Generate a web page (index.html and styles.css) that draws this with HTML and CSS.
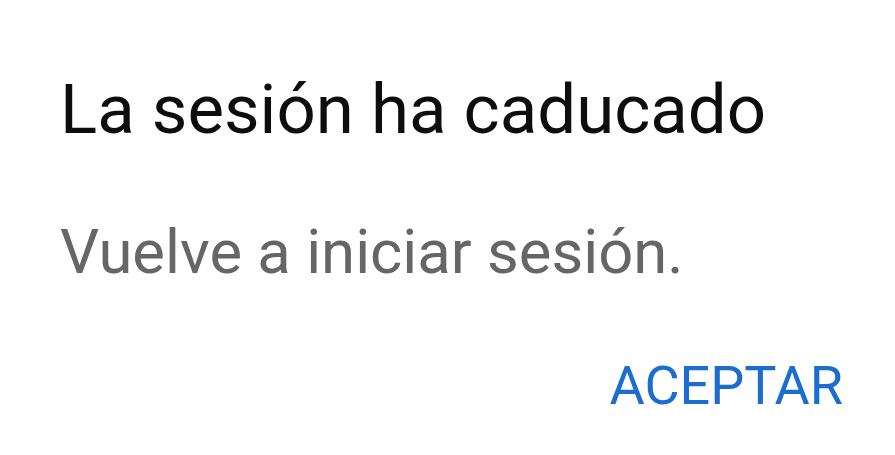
FILE: index.html
```html
<!DOCTYPE html>
<html lang="es">
<head>
<meta charset="utf-8">
<link rel="stylesheet" href="styles.css">
</head>
<body>
<div class="dialog">
  <h1 class="title">La sesión ha caducado</h1>
  <p class="message">Vuelve a iniciar sesión.</p>
  <div class="actions"><span class="button">ACEPTAR</span></div>
</div>
</body>
</html>
```
FILE: styles.css
```css
html, body { margin: 0; padding: 0; background: #fff; }
body { width: 895px; height: 455px; overflow: hidden; font-family: Roboto, "Noto Sans", sans-serif; }
.dialog { padding: 0 52px 0 60px; display: flex; flex-direction: column; }
.title { margin: 0; padding-top: 69px; font-size: 69px; font-weight: 400; color: #0d0d0d; line-height: 81px; letter-spacing: 0; }
.message { margin: 0; padding-top: 66px; font-size: 61.6px; color: #666; line-height: 72px; }
.actions { display: flex; justify-content: flex-end; padding-top: 66px; }
.button { font-size: 54px; color: #1b6dd0; line-height: 63px; }
```
